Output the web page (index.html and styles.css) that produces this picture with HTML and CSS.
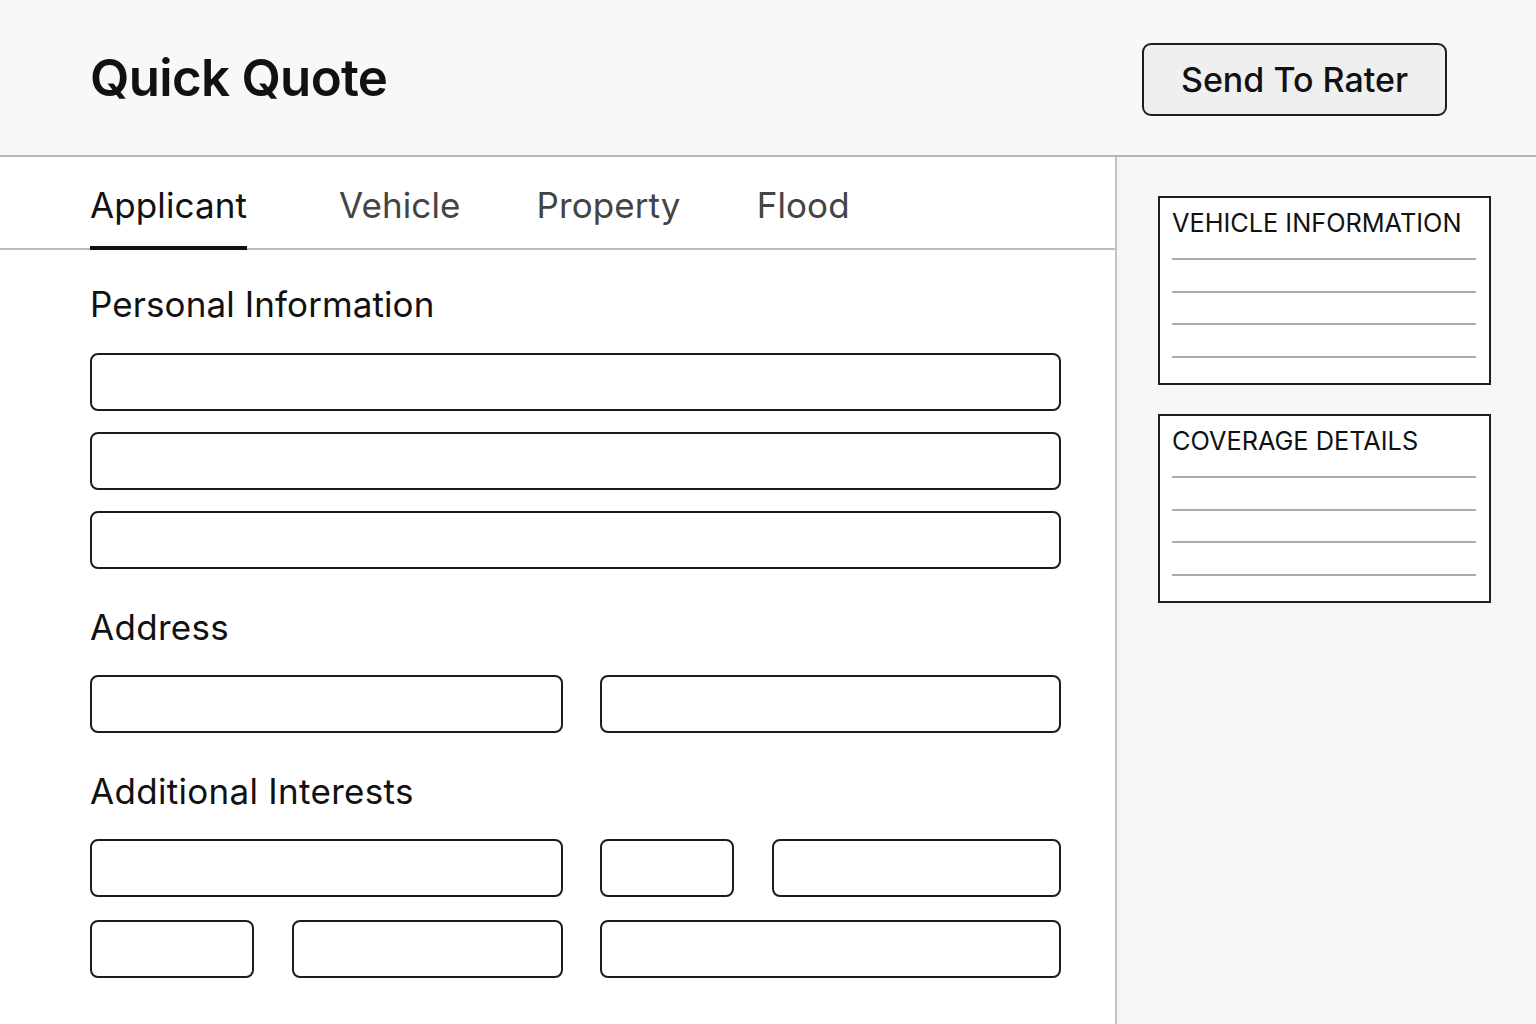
FILE: index.html
```html
<!DOCTYPE html>
<html lang="en">
<head>
<meta charset="utf-8">
<title>Quick Quote</title>
<link rel="stylesheet" href="styles.css">
</head>
<body>
<header class="topbar">
  <h1 class="title">Quick Quote</h1>
  <button class="btn" type="button">Send To Rater</button>
</header>
<div class="layout">
  <main class="pane">
    <nav class="tabs">
      <a class="tab active">Applicant</a>
      <a class="tab">Vehicle</a>
      <a class="tab">Property</a>
      <a class="tab">Flood</a>
    </nav>
    <section class="form">
      <h2 class="section-title first">Personal Information</h2>
      <div class="grid grid-personal">
        <input class="field span-all" type="text">
        <input class="field span-all" type="text">
        <input class="field span-all" type="text">
      </div>
      <h2 class="section-title">Address</h2>
      <div class="grid">
        <input class="field span-left" type="text">
        <input class="field span-right" type="text">
      </div>
      <h2 class="section-title">Additional Interests</h2>
      <div class="grid grid-extra">
        <input class="field span-left" type="text">
        <input class="field" type="text">
        <input class="field" type="text">
        <input class="field" type="text">
        <input class="field" type="text">
        <input class="field span-right" type="text">
      </div>
    </section>
  </main>
  <aside class="sidebar">
    <div class="card">
      <div class="card-title">VEHICLE INFORMATION</div>
      <div class="rules"><span class="rule"></span><span class="rule"></span><span class="rule"></span><span class="rule"></span></div>
    </div>
    <div class="card">
      <div class="card-title">COVERAGE DETAILS</div>
      <div class="rules"><span class="rule"></span><span class="rule"></span><span class="rule"></span><span class="rule"></span></div>
    </div>
  </aside>
</div>
</body>
</html>
```
FILE: styles.css
```css
* { box-sizing: border-box; }
html, body {
  margin: 0;
  padding: 0;
  height: 100%;
  overflow: hidden;
}
body {
  font-family: Inter, "Noto Sans", "Liberation Sans", sans-serif;
  color: #111;
  background: #fff;
}
.topbar {
  height: 157px;
  background: #f8f8f8;
  border-bottom: 2px solid #b6b6b6;
  display: flex;
  align-items: center;
  justify-content: space-between;
  padding: 0 89px 0 90px;
}
.title {
  margin: 0;
  font-size: 51px;
  line-height: 1.2;
  font-weight: 600;
  letter-spacing: -0.7px;
  color: #111;
}
.btn {
  width: 305px;
  height: 73px;
  margin-top: 3px;
  background: #efefef;
  border: 2px solid #1e1e1e;
  border-radius: 9px;
  font-family: inherit;
  font-size: 34px;
  font-weight: 500;
  color: #111;
  padding: 0;
}
.layout {
  display: flex;
  height: calc(100% - 157px);
}
.pane {
  width: 1117px;
  flex: none;
  background: #fff;
  border-right: 2px solid #c2c2c2;
}
.tabs {
  height: 93px;
  display: flex;
  align-items: flex-end;
  gap: 76px;
  padding-left: 90px;
  border-bottom: 2px solid #bdbdbd;
}
.tab {
  font-size: 35px;
  line-height: 40px;
  letter-spacing: 0.1px;
  color: #444;
  padding-bottom: 21px;
  border-bottom: 4px solid transparent;
  margin-bottom: -2px;
}
.tab.active {
  color: #111;
  border-bottom-color: #111;
  margin-right: 16px;
}
.form {
  padding-left: 90px;
  width: 1061px;
}
.section-title {
  margin: 38px 0 28px;
  font-size: 35px;
  line-height: 40px;
  letter-spacing: 0.3px;
  font-weight: 400;
  color: #111;
}
.section-title.first {
  margin-top: 34px;
  margin-bottom: 29px;
  letter-spacing: 0.1px;
}
.grid {
  display: grid;
  grid-template-columns: 164px 271px 134px 1fr;
  column-gap: 37.5px;
  row-gap: 23px;
}
.grid-personal { row-gap: 21px; }
.span-all { grid-column: 1 / -1; }
.span-left { grid-column: 1 / 3; }
.span-right { grid-column: 3 / 5; }
.field {
  display: block;
  width: 100%;
  height: 58px;
  border: 2px solid #1c1c1c;
  border-radius: 8px;
  background: #fff;
  margin: 0;
  font: inherit;
}
.sidebar {
  flex: 1;
  background: #f6f6f6;
  padding: 39px 0 0 41px;
  display: flex;
  flex-direction: column;
  gap: 29px;
}
.card {
  width: 333px;
  height: 189px;
  background: #fff;
  border: 2px solid #1e1e1e;
  padding: 8.5px 13px 0 12px;
}
.card-title {
  font-size: 25.3px;
  line-height: 32px;
  font-weight: 400;
  color: #111;
  white-space: nowrap;
}
.rules {
  margin-top: 19.5px;
  display: flex;
  flex-direction: column;
  gap: 30.7px;
}
.rule {
  display: block;
  height: 2px;
  background: #ababab;
}
```
